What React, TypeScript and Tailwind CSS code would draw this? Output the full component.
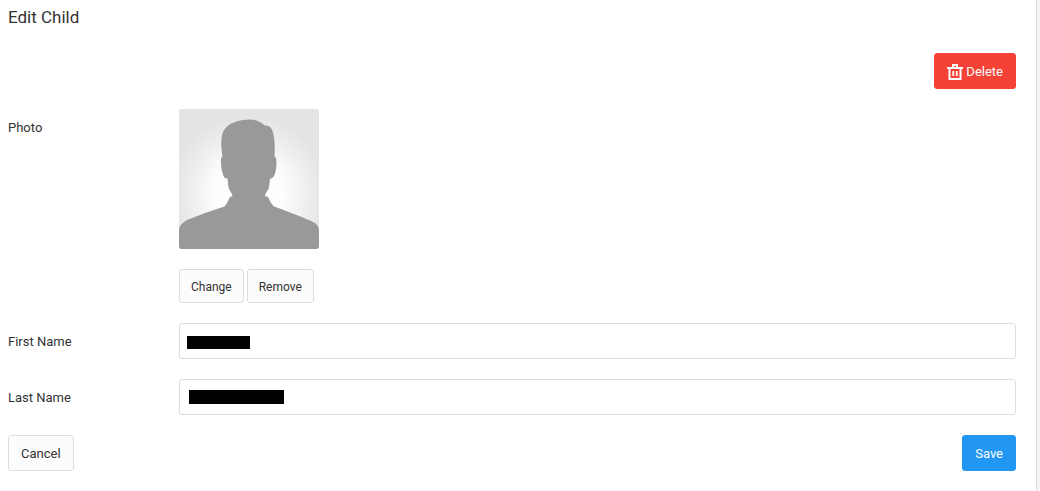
import { useState } from "react";
import type { ButtonHTMLAttributes } from "react";
import clsx from "clsx";

const Avatar = () => (
  <svg viewBox="0 0 140 140" role="img" aria-label="Child photo" className="size-[140px] rounded-[3px]">
    <defs>
      <radialGradient id="glow" gradientUnits="userSpaceOnUse" cx="70" cy="84" r="78">
        <stop offset="0" stopColor="#ffffff" />
        <stop offset="0.45" stopColor="#fdfdfd" />
        <stop offset="0.75" stopColor="#eeeeee" />
        <stop offset="1" stopColor="#e4e4e4" />
      </radialGradient>
    </defs>
    <rect width="140" height="140" fill="url(#glow)" />
    <path
      fill="#999999"
      d="M71 10.5C77 10.5 82 13 86 16.5C90 16.5 92 18 93.500 22C96 29 96 38 95.500 47C97 48 97.500 51 97.500 54C97.500 59 96.500 64 95 67C94 69 92.500 69.500 91 69.500C90.500 73 90.500 76 89.500 80C88.500 82 86 84 86 87L89 88C91 92 92 95 95 97.500C107 102 119 106 131 111.500C137 114 140 117 140 122V140H0V122C0 117 3 114 8 111C20 106 32 102 45.500 97.500C48 95 49 92 51 88L53.500 87C53 84 51 82 50 80C49 76 49 73 48.500 69.500C46.500 69.500 45.500 69 44.500 67C43 63 42 58 42 53C42 50 42 48.500 43.500 47C42 38 41.500 30 44 23C48 14 60 10.500 71 10.500Z"
    />
  </svg>
);

const TrashIcon = () => (
  <svg viewBox="0 0 16 16" aria-hidden="true" className="size-4" fill="none" stroke="currentColor" strokeWidth="2">
    <path d="M0 4H16M6 4V1H10V4M2.500 4V15H13.500V4" />
    <path d="M6.250 7V12M9.750 7V12" strokeWidth="1.750" />
  </svg>
);

const variants = {
  plain: "border-[#dddddd] bg-[#fcfcfc] text-[#333333]",
  danger: "border-[#f44336] bg-[#f44336] text-white",
  primary: "border-[#2196f3] bg-[#2196f3] text-white",
};

type ButtonProps = ButtonHTMLAttributes<HTMLButtonElement> & {
  variant?: keyof typeof variants;
  small?: boolean;
};

const Button = ({ variant = "plain", small, children, ...props }: ButtonProps) => (
  <button
    type="button"
    className={clsx(
      "flex items-center gap-[3px] rounded-[3px] border pt-0.5",
      small ? "h-[34px] px-[11px] text-[12px]" : "h-9 px-3 text-[13px]",
      variants[variant]
    )}
    {...props}
  >
    {children}
  </button>
);

const NameField = ({ id, label, maskClass }: { id: string; label: string; maskClass: string }) => {
  const [value, setValue] = useState("");

  return (
    <div className="flex items-center">
      <label htmlFor={id} className="w-[171px] shrink-0 pt-0.5">
        {label}
      </label>
      <div className="relative flex-1">
        <input
          id={id}
          type="text"
          value={value}
          onChange={(e) => setValue(e.target.value)}
          className="block h-9 w-full rounded-[3px] border border-[#dddddd] bg-white px-2"
        />
        {/* Hidden name */}
        {!value && <span className={clsx("pointer-events-none absolute bg-black", maskClass)} />}
      </div>
    </div>
  );
};

const App = () => {
  return (
    <div className="min-h-screen bg-[#f5f5f5] pr-[3px] font-['Roboto',sans-serif] text-[13px] leading-5 text-[#333333]">
      <main className="min-h-screen border-r border-[#dddddd] bg-white pt-[7px] pr-5 pb-5 pl-2">
        <h1 className="text-[17px] leading-5">Edit Child</h1>

        <form className="mt-[26px] flex flex-col gap-5" onSubmit={(e) => e.preventDefault()}>
          <div className="flex justify-end">
            <Button variant="danger">
              <TrashIcon />
              Delete
            </Button>
          </div>

          {/* Photo */}
          <div className="flex">
            <span className="w-[171px] shrink-0 pt-[9px]">Photo</span>
            <div className="flex flex-col gap-5">
              <Avatar />
              <div className="flex gap-[3px]">
                <Button small>Change</Button>
                <Button small>Remove</Button>
              </div>
            </div>
          </div>

          <NameField id="first-name" label="First Name" maskClass="top-[13px] left-2 h-[13px] w-[63px]" />
          <NameField id="last-name" label="Last Name" maskClass="top-[11px] left-[10px] h-[14px] w-[95px]" />

          <div className="flex justify-between">
            <Button>Cancel</Button>
            <Button variant="primary" type="submit">
              Save
            </Button>
          </div>
        </form>
      </main>
    </div>
  );
};

export default App;
